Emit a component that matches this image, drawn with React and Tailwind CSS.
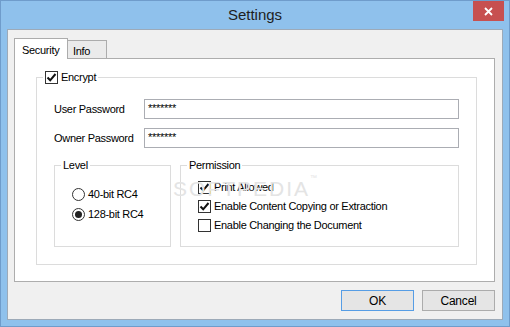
import React from 'react';

const Check = ({ checked }) => (
    <span className="w-[13px] h-[13px] border border-[#333333] bg-white flex items-center justify-center shrink-0">
        {checked && (
            <svg width="11" height="11" viewBox="0 0 11 11">
                <path d="M1.5 5.5 L4.2 8.3 L9.5 2" fill="none" stroke="#111" strokeWidth="2" />
            </svg>
        )}
    </span>
);

const Radio = ({ checked }) => (
    <span className="w-[13px] h-[13px] rounded-full border border-[#333333] bg-white flex items-center justify-center shrink-0">
        {checked && <span className="w-[7px] h-[7px] rounded-full bg-[#222]" />}
    </span>
);

const Field = ({ label }) => (
    <div className="flex items-center h-[20px]">
        <span className="w-[90px]">{label}</span>
        <div className="w-[315px] h-[20px] border border-[#abadb3] bg-white px-[3px] leading-[16px] text-[11px]">*******</div>
    </div>
);

const App = () => {
    return (
        <div
            className="w-[510px] h-[327px] bg-[#8fc1ec] border border-[#6f9ccb] flex flex-col text-[11px] tracking-[-0.3px] text-black"
            style={{ fontFamily: '"Liberation Sans", Arial, sans-serif' }}
        >
            {/* title bar */}
            <div className="relative h-[28px] flex items-center justify-center">
                <span className="text-[15px] tracking-normal text-[#1e1e1e]">Settings</span>
                <div className="absolute right-[5px] top-0 w-[31px] h-[20px] bg-[#c75050] flex items-center justify-center">
                    <svg width="9" height="9" viewBox="0 0 9 9">
                        <path d="M1 1 L8 8 M8 1 L1 8" stroke="white" strokeWidth="1.8" />
                    </svg>
                </div>
            </div>

            {/* client area */}
            <div className="mx-[6px] h-[291px] border border-[#9daab8] bg-[#f0f0f0] pl-[6px] pr-[7px] pt-[8px] flex flex-col">
                {/* tabs */}
                <div className="flex items-end h-[20px]">
                    <div className="relative z-10 w-[54px] h-[21px] -mb-px border border-b-0 border-[#acacac] bg-white pl-[7px] pt-[3px]">Security</div>
                    <div className="w-[40px] h-[18px] -ml-px border border-b-0 border-[#acacac] bg-[#ebebeb] pl-[5px] pt-[2px]">Info</div>
                </div>

                {/* panel */}
                <div className="relative w-[481px] h-[224px] border border-[#adadad] bg-white pl-[21px] pt-[12px]">
                    <fieldset className="w-[441px] h-[194px] border border-[#dcdcdc] pl-[6px]">
                        <legend className="px-[2px] flex items-center gap-[3px] h-[13px]">
                            <Check checked />
                            <span>Encrypt</span>
                        </legend>
                        <div className="ml-[11px] pt-[15px] flex flex-col gap-[9px]">
                            <Field label="User Password" />
                            <Field label="Owner Password" />
                            <div className="flex gap-[9px] mt-[1px]">
                                <fieldset className="w-[117px] h-[89px] border border-[#dcdcdc] pl-[6px]">
                                    <legend className="px-[2px] h-[14px] leading-[14px]">Level</legend>
                                    <div className="ml-[11px] pt-[12px] flex flex-col">
                                        <div className="flex items-center h-[20px] gap-[3px]">
                                            <Radio />
                                            <span>40-bit RC4</span>
                                        </div>
                                        <div className="flex items-center h-[20px] gap-[3px]">
                                            <Radio checked />
                                            <span>128-bit RC4</span>
                                        </div>
                                    </div>
                                </fieldset>
                                <fieldset className="w-[279px] h-[89px] border border-[#dcdcdc] pl-[6px]">
                                    <legend className="px-[2px] h-[14px] leading-[14px]">Permission</legend>
                                    <div className="ml-[11px] pt-[6px] flex flex-col">
                                        <div className="flex items-center h-[19px] gap-[3px]">
                                            <Check checked />
                                            <span>Print Allowed</span>
                                        </div>
                                        <div className="flex items-center h-[19px] gap-[3px]">
                                            <Check checked />
                                            <span>Enable Content Copying or Extraction</span>
                                        </div>
                                        <div className="flex items-center h-[19px] gap-[3px]">
                                            <Check />
                                            <span>Enable Changing the Document</span>
                                        </div>
                                    </div>
                                </fieldset>
                            </div>
                        </div>
                    </fieldset>
                    {/* watermark */}
                    <div className="absolute left-[158px] top-[114px] text-[21px] tracking-[2px] text-[#e4e4e4] pointer-events-none">
                        SOFTPEDIA<span className="text-[7px] align-top">™</span>
                    </div>
                </div>

                {/* buttons */}
                <div className="flex justify-end gap-[8px] mt-[8px] w-[481px]">
                    <button className="w-[73px] h-[21px] border border-[#569de5] bg-[#e5e5e5] text-[12px] tracking-[-0.2px]">OK</button>
                    <button className="w-[73px] h-[21px] border border-[#acacac] bg-[#e5e5e5] text-[12px] tracking-[-0.2px]">Cancel</button>
                </div>
            </div>
        </div>
    );
};

export default App;
